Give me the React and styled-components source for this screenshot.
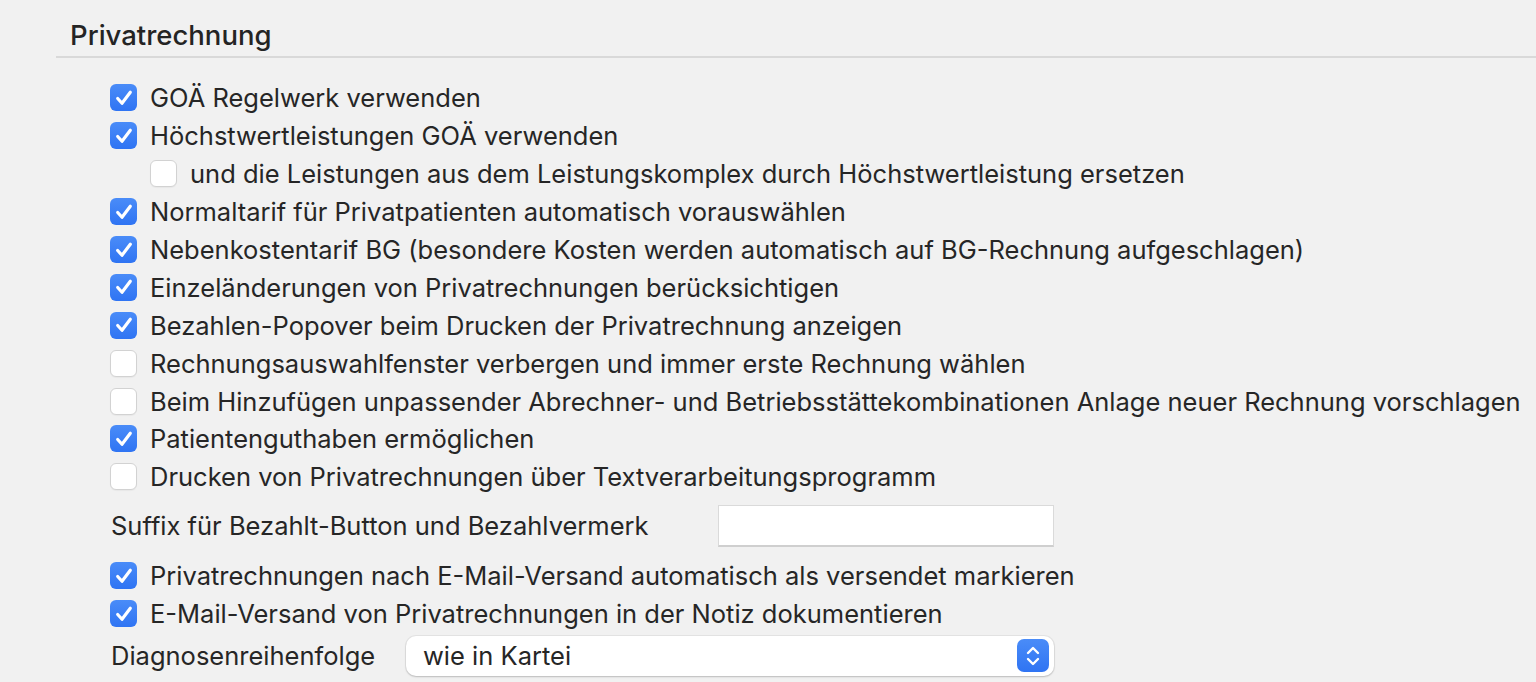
import React from "react";
import styled, { createGlobalStyle } from "styled-components";

const Global = createGlobalStyle`
  html, body { margin: 0; padding: 0; background: #f1f1f1; }
  body { font-family: Inter, "Noto Sans", "Liberation Sans", sans-serif; color: #262626; overflow: hidden; }
`;

const Page = styled.div`
  width: 1536px;
  height: 682px;
  padding-left: 56px;
  box-sizing: border-box;
`;

const Header = styled.div`
  height: 56px;
  border-bottom: 2px solid #d9d9d9;
  display: flex;
  align-items: flex-end;
  padding-left: 14px;
  box-sizing: content-box;
`;

const Title = styled.h2`
  margin: 0 0 1px 0;
  font-size: 27.5px;
  font-weight: 500;
  line-height: 40px;
  color: #242424;
`;

const List = styled.div`
  display: flex;
  flex-direction: column;
  padding: 21px 0 0 54px;
`;

const Row = styled.label`
  display: flex;
  align-items: center;
  gap: 13px;
  height: 37.9px;
  font-size: 25.5px;
  white-space: nowrap;
  padding-left: ${(p) => (p.$indent ? "40px" : "0")};
`;

const Box = styled.span`
  width: 27px;
  height: 27px;
  box-sizing: border-box;
  border-radius: 6px;
  flex: none;
  display: flex;
  align-items: center;
  justify-content: center;
  background: ${(p) => (p.$checked ? "linear-gradient(#4a8cf8, #2f74f3)" : "#ffffff")};
  border: ${(p) => (p.$checked ? "none" : "1px solid #d2d2d2")};
  box-shadow: ${(p) => (p.$checked ? "none" : "0 1px 1px rgba(0,0,0,0.04)")};
`;

const FieldRow = styled.div`
  display: flex;
  align-items: center;
  height: 50px;
  font-size: 25.5px;
  margin: 5px 0 6px 0;
  padding-left: 1px;
`;

const FieldLabel = styled.span`
  width: 607px;
  flex: none;
`;

const TextInput = styled.div`
  width: 336px;
  height: 42px;
  box-sizing: border-box;
  background: #fff;
  border: 1px solid #dadada;
  border-bottom: 2px solid #cfcfcf;
`;

const SelectRow = styled.div`
  display: flex;
  align-items: center;
  height: 42px;
  font-size: 25.5px;
  margin-top: 2px;
  padding-left: 1px;
`;

const SelectLabel = styled.span`
  width: 295px;
  flex: none;
`;

const Select = styled.div`
  width: 648px;
  height: 40px;
  box-sizing: border-box;
  background: #fff;
  border-radius: 10px;
  box-shadow: 0 0 0 1px rgba(0,0,0,0.05), 0 1px 2px rgba(0,0,0,0.18);
  display: flex;
  align-items: center;
  justify-content: space-between;
  padding: 0 5px 0 17px;
`;

const Stepper = styled.span`
  width: 32px;
  height: 33px;
  border-radius: 7px;
  background: linear-gradient(#4a8cf8, #2f74f3);
  display: flex;
  align-items: center;
  justify-content: center;
`;

const Check = () => (
  <svg width="20" height="20" viewBox="0 0 19 19">
    <path d="M3.5 10 L7.6 14.5 L15.5 4" fill="none" stroke="#fff" strokeWidth="3" strokeLinecap="round" strokeLinejoin="round" />
  </svg>
);

const CheckRow = ({ checked, indent, children }) => (
  <Row $indent={indent}>
    <Box $checked={checked}>{checked && <Check />}</Box>
    <span>{children}</span>
  </Row>
);

const items = [
  [true, false, "GOÄ Regelwerk verwenden"],
  [true, false, "Höchstwertleistungen GOÄ verwenden"],
  [false, true, "und die Leistungen aus dem Leistungskomplex durch Höchstwertleistung ersetzen"],
  [true, false, "Normaltarif für Privatpatienten automatisch vorauswählen"],
  [true, false, "Nebenkostentarif BG (besondere Kosten werden automatisch auf BG-Rechnung aufgeschlagen)"],
  [true, false, "Einzeländerungen von Privatrechnungen berücksichtigen"],
  [true, false, "Bezahlen-Popover beim Drucken der Privatrechnung anzeigen"],
  [false, false, "Rechnungsauswahlfenster verbergen und immer erste Rechnung wählen"],
  [false, false, "Beim Hinzufügen unpassender Abrechner- und Betriebsstättekombinationen Anlage neuer Rechnung vorschlagen"],
  [true, false, "Patientenguthaben ermöglichen"],
  [false, false, "Drucken von Privatrechnungen über Textverarbeitungsprogramm"],
];

export default function App() {
  return (
    <Page>
      <Global />
      <Header>
        <Title>Privatrechnung</Title>
      </Header>
      <List>
        {items.map(([c, i, t]) => (
          <CheckRow key={t} checked={c} indent={i}>{t}</CheckRow>
        ))}
        <FieldRow>
          <FieldLabel>Suffix für Bezahlt-Button und Bezahlvermerk</FieldLabel>
          <TextInput />
        </FieldRow>
        <CheckRow checked>Privatrechnungen nach E-Mail-Versand automatisch als versendet markieren</CheckRow>
        <CheckRow checked>E-Mail-Versand von Privatrechnungen in der Notiz dokumentieren</CheckRow>
        <SelectRow>
          <SelectLabel>Diagnosenreihenfolge</SelectLabel>
          <Select>
            <span>wie in Kartei</span>
            <Stepper>
              <svg width="16" height="24" viewBox="0 0 16 24">
                <path d="M3 9 L8 4 L13 9 M3 15 L8 20 L13 15" fill="none" stroke="#fff" strokeWidth="2.4" strokeLinecap="round" strokeLinejoin="round" />
              </svg>
            </Stepper>
          </Select>
        </SelectRow>
      </List>
    </Page>
  );
}
